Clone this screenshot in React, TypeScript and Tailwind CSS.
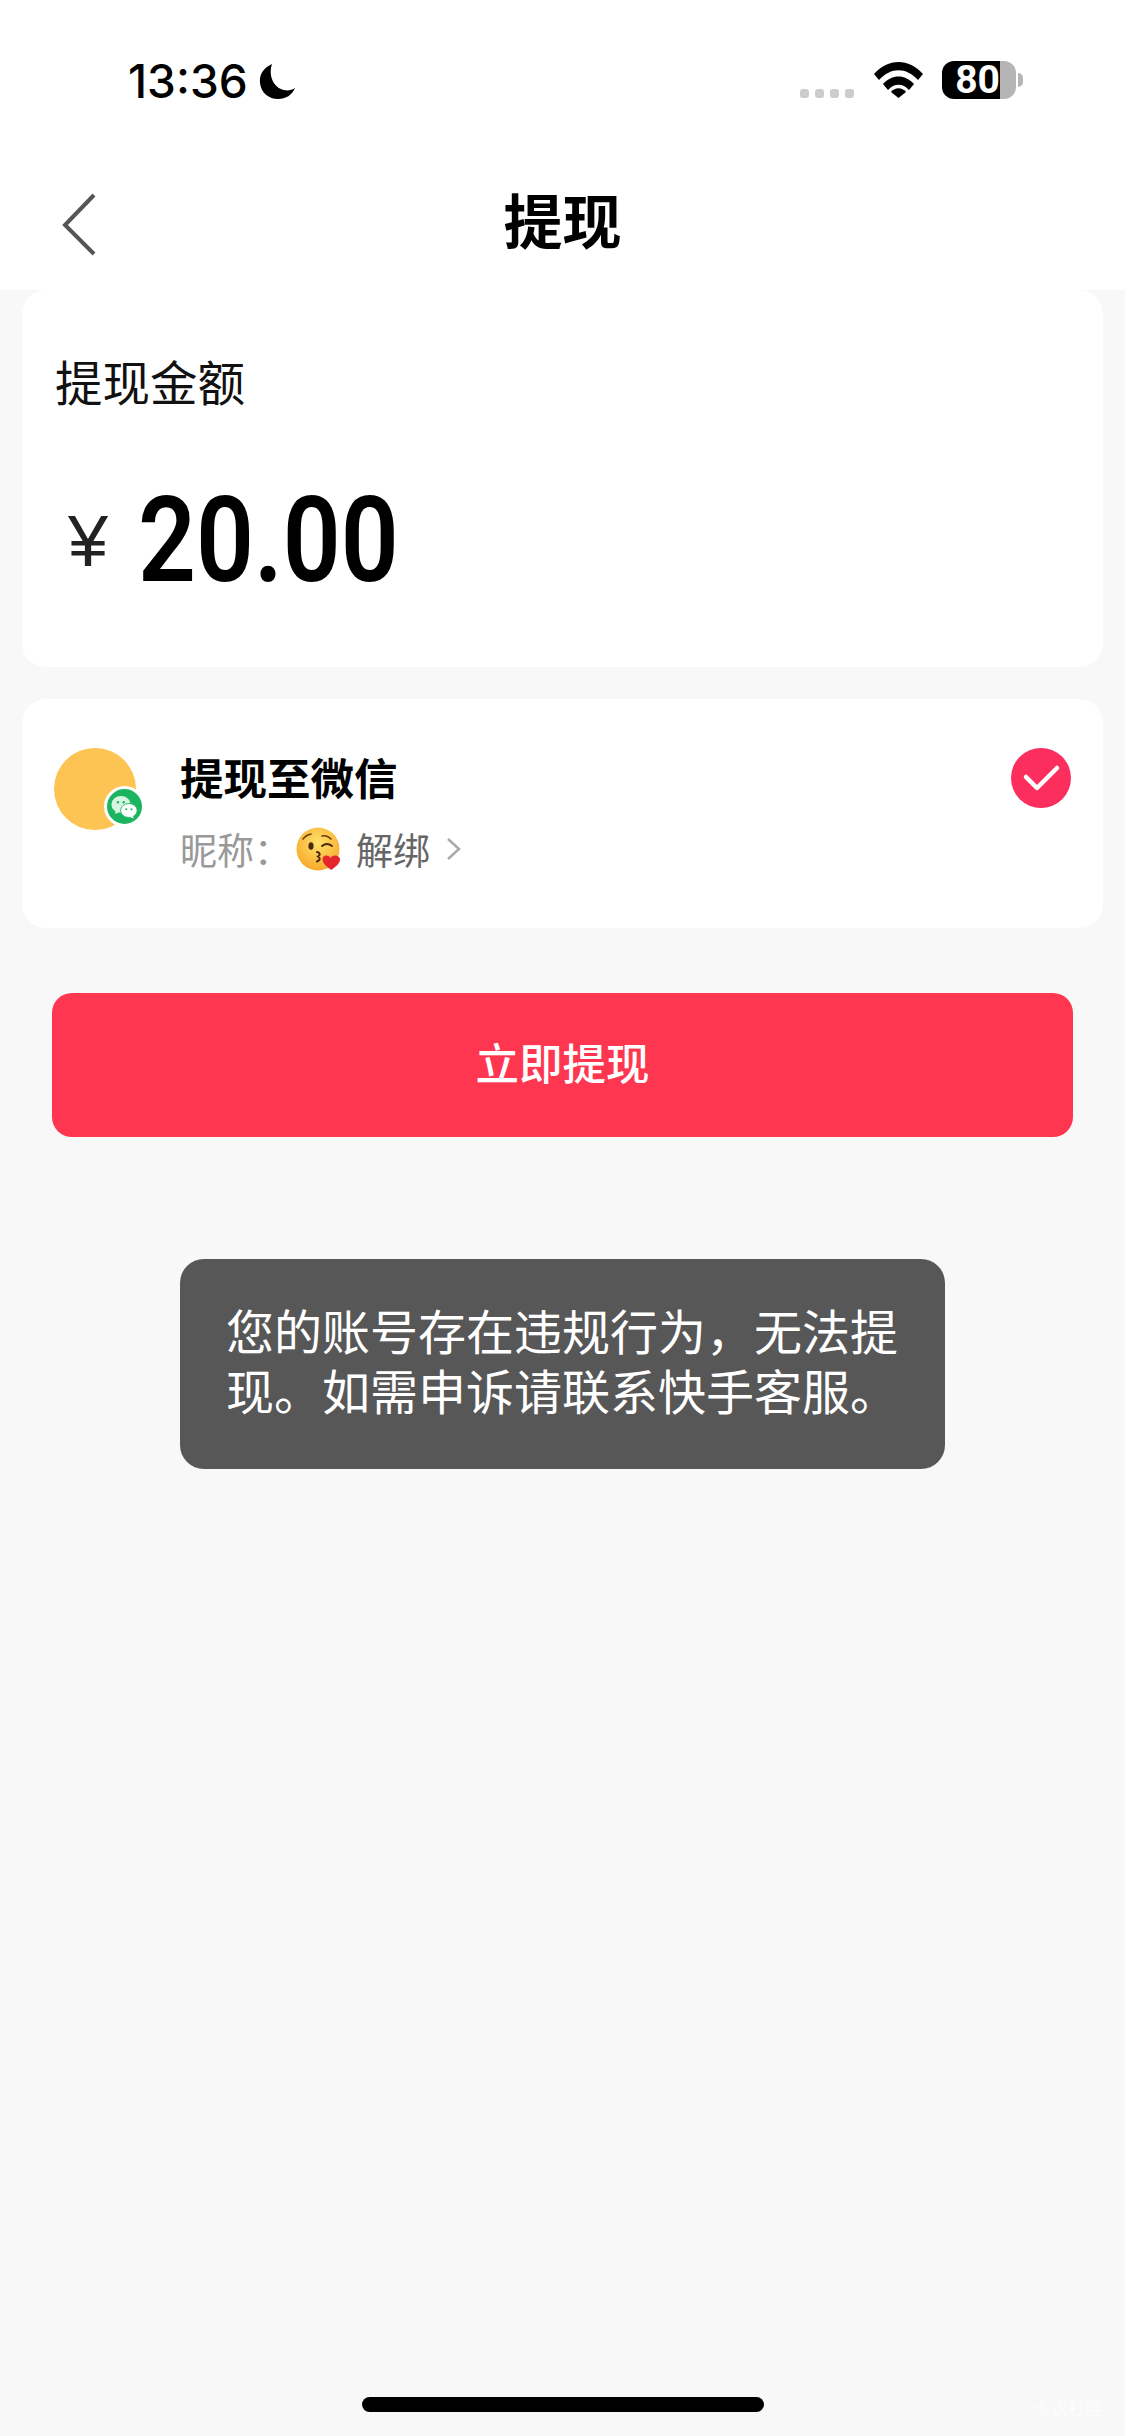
const cjk = '"PingFang SC", "Noto Sans CJK SC", "Liberation Sans", sans-serif';

function Kiss() {
  return (
    <svg viewBox="0 0 45 45" className="w-[45px] h-[45px] ml-[5px] shrink-0">
      <defs>
        <radialGradient id="f" cx="50%" cy="35%" r="65%">
          <stop offset="0" stopColor="#ffe16a" />
          <stop offset="1" stopColor="#f7a92a" />
        </radialGradient>
      </defs>
      <circle cx="22" cy="22" r="21.5" fill="url(#f)" />
      <path d="M7 12q3-4 8-5" stroke="#6b3d12" strokeWidth="1.6" fill="none" strokeLinecap="round" />
      <path d="M26 9q5-1 9 3" stroke="#6b3d12" strokeWidth="1.6" fill="none" strokeLinecap="round" />
      <ellipse cx="15" cy="19" rx="2.6" ry="3.8" fill="#4a2a0c" />
      <path d="M26 19q5-4 10 0" stroke="#4a2a0c" strokeWidth="2" fill="none" strokeLinecap="round" />
      <path d="M21 25q5 1.500 1 4.500q4 2.500-1 5" stroke="#4a2a0c" strokeWidth="2" fill="none" strokeLinecap="round" />
      <path d="M35.500 43c-5-3-9-7-9-11c0-4 6-5 8-1c2-4 10-3 9.500 2c-.5 4-5 7-8.500 10z" fill="#e5262e" />
    </svg>
  );
}

function WeChat() {
  return (
    <svg viewBox="0 0 40 40" className="w-[36px] h-[36px]">
      <ellipse cx="16" cy="17" rx="11" ry="9.500" fill="#d8f5e2" />
      <path d="M10 24l-1 4l5-2z" fill="#d8f5e2" />
      <circle cx="12.500" cy="14.500" r="1.400" fill="#1cb55f" />
      <circle cx="19" cy="14.500" r="1.400" fill="#1cb55f" />
      <ellipse cx="25" cy="24" rx="9.500" ry="8" fill="#fff" stroke="#1cb55f" strokeWidth="1" />
      <path d="M29 30l2 3l-5-1.500z" fill="#fff" />
      <circle cx="22" cy="22.500" r="1.200" fill="#1cb55f" />
      <circle cx="28" cy="22.500" r="1.200" fill="#1cb55f" />
    </svg>
  );
}

export default function App() {
  return (
    <div className="relative flex flex-col w-[1125px] h-[2436px] bg-[#f8f8f8] overflow-hidden" style={{ fontFamily: cjk }}>
      <header className="bg-white h-[290px] shrink-0">
        <div className="flex items-start justify-between h-[183px] pl-[128px] pr-[102px] pt-[61px]">
          <div className="flex items-center gap-[11px] h-[39px]">
            <span className="text-[46px] font-medium leading-none text-black" style={{ fontFamily: 'Inter, sans-serif' }}>13:36</span>
            <svg viewBox="0 0 37 36" className="w-[37px] h-[36px]">
              <path d="M13 1C4 5 0 12 1 20c1 10 9 16 18 16c8 0 14-4 17-11c-3 2-7 3-11 2C15 25 9 13 13 1z" fill="#000" />
            </svg>
          </div>
          <div className="flex items-start">
            <div className="flex gap-[6px] mt-[28px]">
              <i className="block w-[9px] h-[9px] rounded-[3px] bg-[#cccccc]" />
              <i className="block w-[9px] h-[9px] rounded-[3px] bg-[#cccccc]" />
              <i className="block w-[9px] h-[9px] rounded-[3px] bg-[#cccccc]" />
              <i className="block w-[9px] h-[9px] rounded-[3px] bg-[#cccccc]" />
            </div>
            <svg viewBox="0 0 49 36" className="w-[49px] h-[36px] ml-[20px] mt-[1px]">
              <path d="M0 12C14-4 35-4 49 12l-5 6C32 5 17 5 5 18z" fill="#000" />
              <path d="M9 22c9-10 22-10 31 0l-5 6c-6-7-15-7-21 0z" fill="#000" />
              <path d="M17 30c4-5 11-5 15 0l-7.500 6z" fill="#000" />
            </svg>
            <div className="flex items-center ml-[19px]">
              <div className="flex items-center justify-end w-[58px] h-[38px] rounded-l-[12px] bg-black">
                <span className="text-[39px] font-bold leading-[38px] text-white" style={{ fontFamily: 'Roboto, sans-serif' }}>80</span>
              </div>
              <div className="w-[16px] h-[38px] rounded-r-[12px] bg-[#b5b5b5]" />
              <div className="w-[5px] h-[14px] ml-[2px] rounded-r-full bg-[#b5b5b5]" />
            </div>
          </div>
        </div>
        <div className="relative flex items-center justify-center h-[70px]">
          <svg viewBox="0 0 36 64" className="absolute left-[61px] top-[9px] w-[36px] h-[64px]">
            <path d="M33 3L4 33l29 29" fill="none" stroke="#555555" strokeWidth="4" />
          </svg>
          <span className="text-[59px] font-bold leading-none text-black">提现</span>
        </div>
      </header>

      <section className="mx-[22px] h-[377px] rounded-[24px] bg-white pt-[63px] pl-[33px]">
        <div className="text-[47.5px] leading-[56px] text-[#111111]">提现金额</div>
        <div className="flex items-center mt-[82px] h-[100px]">
          <span className="text-[72px] leading-none text-[#222222] ml-[13px]" style={{ fontFamily: '"Liberation Sans", sans-serif' }}>¥</span>
          <span className="text-[118px] font-semibold leading-none text-black ml-[30px] origin-left scale-x-[0.86]" style={{ fontFamily: 'Roboto, sans-serif' }}>20.00</span>
        </div>
      </section>

      <section className="relative flex mx-[22px] mt-[32px] h-[229px] rounded-[24px] bg-white pl-[32px] pt-[49px]">
        <div className="relative w-[82px] h-[82px] rounded-full bg-[#fdc353] shrink-0">
          <div className="absolute left-[50px] top-[38px] flex items-center justify-center w-[41px] h-[41px] rounded-full bg-[#1cb55f] border-[3px] border-white">
            <WeChat />
          </div>
        </div>
        <div className="ml-[44px] mt-[1px]">
          <div className="text-[43.5px] font-semibold leading-[52px] text-black mt-[2px]">提现至微信</div>
          <div className="flex items-center mt-[22px] h-[48px]">
            <span className="text-[37px] leading-none text-[#999999]">昵称：</span>
            <Kiss />
            <span className="text-[37px] leading-none text-[#666666] ml-[15px]">解绑</span>
            <svg viewBox="0 0 16 24" className="w-[16px] h-[24px] ml-[16px]">
              <path d="M2 2l11 10L2 22" fill="none" stroke="#aaaaaa" strokeWidth="2.500" />
            </svg>
          </div>
        </div>
        <div className="absolute right-[32px] top-[49px] flex items-center justify-center w-[60px] h-[60px] rounded-full bg-[#fb2e5e]">
          <svg viewBox="0 0 60 60" className="w-[60px] h-[60px]">
            <path d="M15 29l11 11l20-20" fill="none" stroke="#ffffff" strokeWidth="4.500" strokeLinecap="round" strokeLinejoin="round" />
          </svg>
        </div>
      </section>

      <button className="flex items-center justify-center mx-[52px] mt-[65px] h-[144px] rounded-[20px] bg-[#fe3650] pb-[6px] text-[43.500px] font-medium text-white">立即提现</button>

      <div className="self-center mt-[122px] w-[765px] h-[210px] rounded-[24px] bg-[#575757] pl-[46px] pr-[40px] pt-[40px] text-[48px] leading-[60px] text-white">
        您的账号存在违规行为，无法提现。如需申诉请联系快手客服。
      </div>

      <div className="absolute left-[362px] top-[2397px] w-[402px] h-[15px] rounded-full bg-black" />
      <div className="absolute left-[1033px] top-[2396px] text-[18px] leading-[22px] tracking-[-0.5px] text-white/70">卡农社区</div>
    </div>
  );
}
